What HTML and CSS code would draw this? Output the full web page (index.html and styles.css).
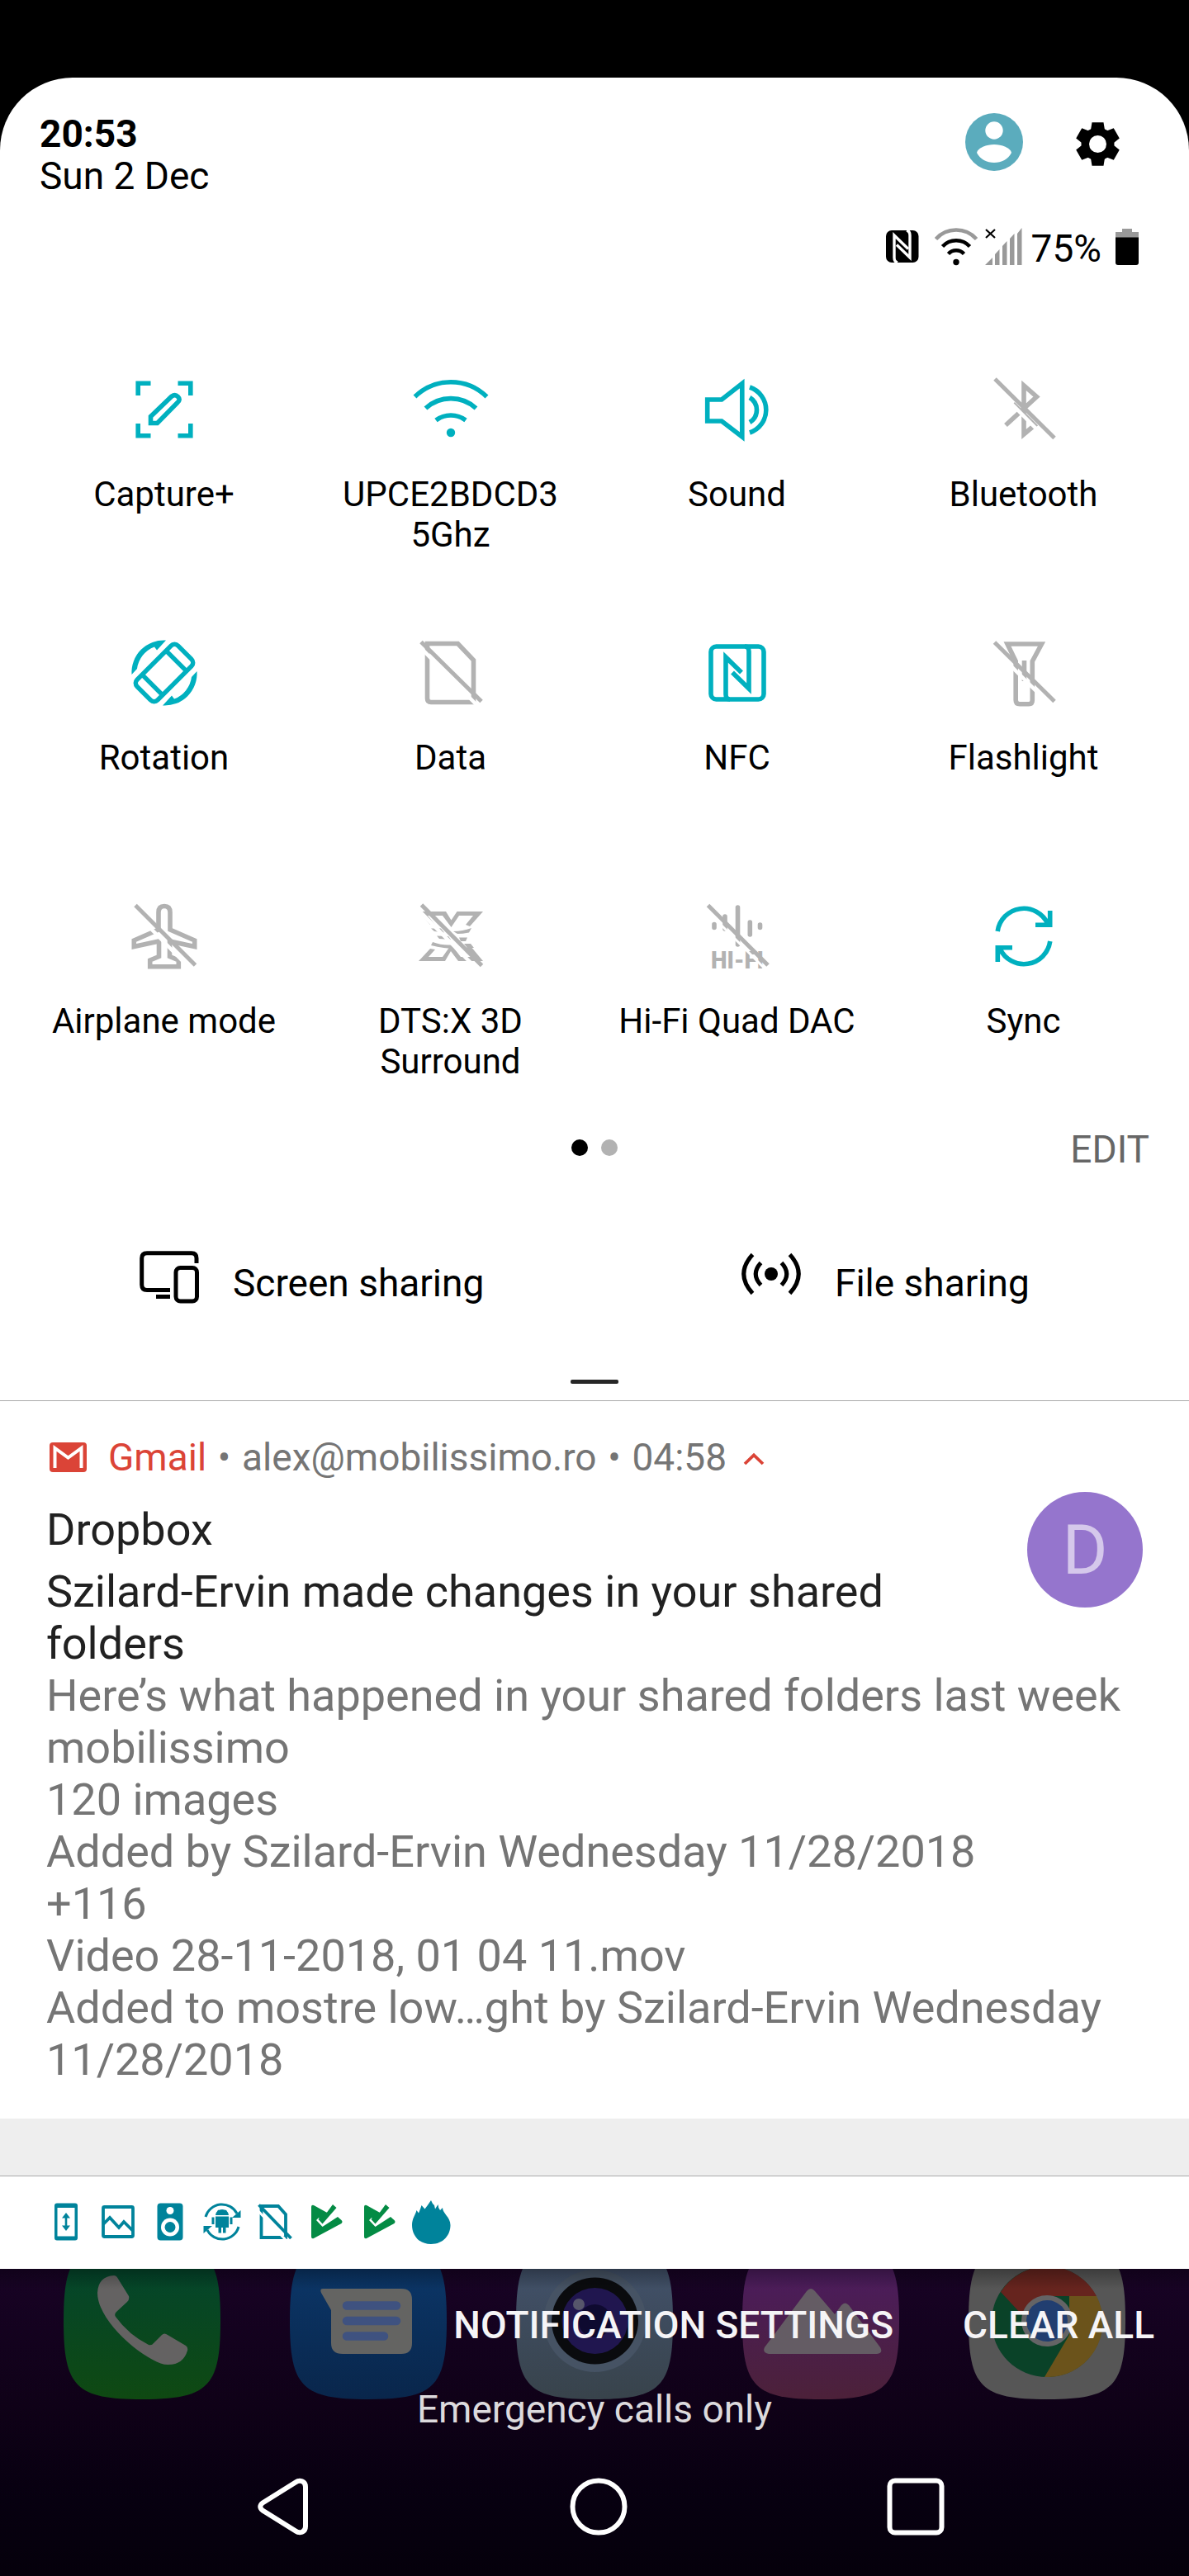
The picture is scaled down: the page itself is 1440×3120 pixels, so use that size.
FILE: index.html
```
<!DOCTYPE html>
<html lang="en">

<head>
    <meta charset="UTF-8">
    <meta name="viewport" content="width=device-width, initial-scale=1.0">
    <title>Notifications</title>
    <link rel="stylesheet" href="styles.css">
</head>

<body>
    <div class="screen">
        <div class="panel">
            <header class="header">
                <div class="clock">
                    <div class="time">20:53</div>
                    <div class="date">Sun 2 Dec</div>
                </div>
                <div class="header-actions">
                    <svg width="70" height="70" viewBox="0 0 70 70">
                        <circle cx="35" cy="35" r="35" fill="#5bacbd" />
                        <circle cx="35" cy="21" r="10.7" fill="#fff" />
                        <path d="M14 48C15 42 26 38 35 38S55 42 56 48C52 56 44 60 35 60S18 56 14 48Z" fill="#fff" />
                    </svg>
                    <svg class="gear" width="53" height="53" viewBox="-26.5 -26.5 53 53">
                        <g fill="#000">
                            <circle r="20" />
                            <path id="tooth" d="M-7 26.3H7L9 14H-9ZM-7 -26.3H7L9 -14H-9Z" />
                            <use href="#tooth" transform="rotate(60)" />
                            <use href="#tooth" transform="rotate(120)" />
                        </g>
                        <circle r="10.5" fill="#fff" />
                    </svg>
                </div>
            </header>

            <div class="status">
                <svg width="40" height="50" viewBox="0 0 40 50">
                    <rect y="5" width="39.5" height="39" rx="7" fill="#000" />
                    <path d="M14 44Q10 43 10 38V11L27 27.5" fill="none" stroke="#fff" stroke-width="3.4" />
                    <path d="M25 5Q29 6 29 11V38L13 22.500" fill="none" stroke="#fff" stroke-width="3.4" />
                </svg>
                <svg class="status-wifi" width="52" height="50" viewBox="-26 0 52 50">
                    <g fill="none" stroke="#000" stroke-width="4.500">
                        <path d="M-24.500 15.500A33 33 0 0 1 24.500 15.500" stroke="#999" />
                        <path d="M-16.500 24.500A22.500 22.500 0 0 1 16.500 24.500" />
                        <path d="M-9.500 33.500A13 13 0 0 1 9.500 33.500" />
                    </g>
                    <circle cy="43.500" r="3.700" fill="#000" />
                </svg>
                <svg class="status-signal" width="46" height="50" viewBox="0 0 46 50">
                    <path d="M1 4L12 14M12 4L1 14" stroke="#000" stroke-width="2.200" />
                    <path d="M0 47L9 38V47ZM12 47V34L17.500 28V47ZM21 47V24L26.500 18V47ZM30 47V15L35.500 9V47ZM39 47V9L44.500 2V47Z" fill="#999" />
                </svg>
                <span class="percent">75%</span>
                <svg class="battery" width="28" height="50" viewBox="0 0 28 50">
                    <path d="M0 14V7H8V3H20V7H28V14Z" fill="#999" />
                    <path d="M0 13.500H28V44Q28 47 25 47H3Q0 47 0 44Z" fill="#000" />
                </svg>
            </div>

            <div class="tiles">
                <div class="tile on">
                    <svg viewBox="-48 -48 96 96">
                        <path d="M-31.800 -17V-31.800H-16.500M16.500 -31.800H31.800V-17M31.800 17V31.800H16.500M-16.500 31.800H-31.800V17" />
                        <path d="M-16.500 16.500V8.500L9 -16Q13 -19 16.500 -15.500T16 -8.500L-8.500 16.500Z" />
                    </svg>
                    <span>Capture+</span>
                </div>
                <div class="tile on">
                    <svg viewBox="-48 -48 96 96">
                        <path d="M-43.500 -15.500A62 62 0 0 1 43.500 -15.500M-30.500 -1.500A45 45 0 0 1 30.500 -1.500M-18 13A30 30 0 0 1 18 13" />
                        <circle class="solid" cy="28" r="5.200" />
                    </svg>
                    <span>UPCE2BDCD3<br>5Ghz</span>
                </div>
                <div class="tile on">
                    <svg viewBox="-48 -48 96 96">
                        <path d="M-36.300 -12H-19L5.800 -31.500V33L-19 14H-36.300Z" />
                        <path d="M15 -27A29 29 0 0 1 15 28M15 -14.500A17.500 17.500 0 0 1 15 15.500" />
                    </svg>
                    <span>Sound</span>
                </div>
                <div class="tile">
                    <svg viewBox="-48 -48 96 96">
                        <path d="M-22 19L15.500 -15.500L0 -29V30L13 19L0 6L-13 -7" />
                        <path class="gap" d="M-40.500 -33L32 40.500" />
                        <path class="slash" d="M-35 -37L37 34.500" />
                    </svg>
                    <span>Bluetooth</span>
                </div>

                <div class="tile on">
                    <svg viewBox="-48 -48 96 96">
                        <g transform="rotate(-45)">
                            <rect x="-35" y="-17.500" width="70" height="35" rx="6" />
                            <path d="M-20.500 -17.500V17.500M20.500 -17.500V17.500" />
                            <path d="M-27.700 -11.500V11.500M27.700 -11.500V11.500" class="thin" />
                        </g>
                        <path class="solid" d="M-39.500 2A39 39 0 0 1 2 -39.500L-9 -27.500L-12 -31.500A33 33 0 0 0 -33 -5Z" />
                        <path class="solid" d="M-39.500 2A39 39 0 0 1 2 -39.500L-9 -27.500L-12 -31.500A33 33 0 0 0 -33 -5Z" transform="rotate(180)" />
                    </svg>
                    <span>Rotation</span>
                </div>
                <div class="tile">
                    <svg viewBox="-48 -48 96 96">
                        <path d="M-28.500 -35.500H8.500L27.500 -15.500V35.500H-24Q-28.500 35.500 -28.500 31Z" />
                        <path class="gap" d="M-42 -36L31.500 39" />
                        <path class="slash" d="M-36 -37.500L37 34.500" />
                    </svg>
                    <span>Data</span>
                </div>
                <div class="tile on">
                    <svg viewBox="-48 -48 96 96">
                        <rect x="-32" y="-32" width="64" height="64" rx="6.500" />
                        <path d="M9 -32Q14 -32 14 -26V19L-6 -.5" />
                        <path d="M-9 32Q-14 32 -14 26V-19L5 -.5" />
                    </svg>
                    <span>NFC</span>
                </div>
                <div class="tile">
                    <svg viewBox="-48 -48 96 96">
                        <path d="M-20 -35H21.500L10.300 -14V33Q10.300 37.800 6 37.800H-5Q-9.800 37.800 -9.800 33V-14ZM.5 -15V10" />
                        <path class="gap" d="M-41.500 -34L32 39" />
                        <path class="slash" d="M-35.500 -37L37 34.500" />
                    </svg>
                    <span>Flashlight</span>
                </div>

                <div class="tile">
                    <svg viewBox="-48 -48 96 96">
                        <path d="M0 -36.500Q7 -36.500 7 -29V-8L36.700 5V12.500L6.500 6V24.500L17.300 29V36.800H-17.300V29L-6.500 24.500V6L-36.700 12.500V5L-7 -8V-29Q-7 -36.500 0 -36.500Z" />
                        <path class="gap" d="M-40.500 -34L32 40" />
                        <path class="slash" d="M-35 -37.500L37.500 35" />
                    </svg>
                    <span>Airplane mode</span>
                </div>
                <div class="tile">
                    <svg viewBox="-48 -48 96 96">
                        <path class="solid" d="M-39 -30H-6L.5 -19.500L7.500 -30H39L23 -12L18 -14L27 -25H10L.5 -11L-10 -25H-28L-19 -14H-25Z" />
                        <path class="solid" d="M-39 30H-7L0 18L9 30H39L24 12L18 14L26 25H12L.5 10L-10 25H-27L-19 16L-25 15Z" />
                        <path class="solid" d="M-24 -9.500H-12L-8 -4.500L-20 -6ZM3 -6Q14 -6 25 -10L22 -4.500Q14 -3 8 -3ZM-17 -.5L-3 0L0 4L-14 3ZM10 1.500H20L18 6L12 6ZM-22 7Q-8 12 3 10L6 15Q-8 15 -24 11ZM16 9L24 9L28 14H20Z" />
                        <path class="gap" d="M-40.500 -33L33 41" />
                        <path class="slash" d="M-35.500 -38L37.500 35.500" />
                    </svg>
                    <span>DTS:X 3D Surround</span>
                </div>
                <div class="tile">
                    <svg viewBox="-48 -48 96 96">
                        <path class="bars" d="M-28 -14.500V-10.500M-15 -24V-9M.5 -35V10M15.300 -17V-2M27.500 -14V-10.500" />
                        <text x="-32" y="38.500" textLength="64" lengthAdjust="spacingAndGlyphs">HI-FI</text>
                        <path class="gap narrow" d="M-40 -34L34 40" />
                        <path class="slash" d="M-35.500 -37.500L37 35" />
                    </svg>
                    <span>Hi-Fi Quad DAC</span>
                </div>
                <div class="tile on">
                    <svg viewBox="-48 -48 96 96">
                        <path d="M-31.800 -6A32 32 0 0 1 29 -15M31.700 -31V-13.800H14" />
                        <path d="M31.800 6A32 32 0 0 1 -29 15M-31.700 31V13.800H-14" />
                    </svg>
                    <span>Sync</span>
                </div>
            </div>

            <div class="pager">
                <div class="dots"><i class="active"></i><i></i></div>
                <span class="edit">EDIT</span>
            </div>

            <div class="share">
                <div class="share-item">
                    <svg width="72" height="66" viewBox="0 0 72 66">
                        <g fill="none" stroke="#000" stroke-width="5">
                            <path d="M69 15V9Q69 2.700 63 2.700H9Q2.700 2.700 2.700 9V41Q2.700 47.500 9 47.500H37M20 55.500H37" />
                            <rect x="44" y="20.500" width="25.500" height="40.500" rx="5.500" />
                        </g>
                    </svg>
                    <span>Screen sharing</span>
                </div>
                <div class="share-item">
                    <svg width="72" height="66" viewBox="0 0 72 66">
                        <circle cx="36" cy="28" r="8" />
                        <g fill="none" stroke="#000" stroke-width="5">
                            <path d="M13.500 4.500Q-8 28 13.500 51.500M58.500 4.500Q80 28 58.500 51.500M23.500 14.500Q11 28 23.500 41.500M48.500 14.500Q61 28 48.500 41.500" />
                        </g>
                    </svg>
                    <span>File sharing</span>
                </div>
            </div>
            <div class="handle"></div>

            <div class="notification">
                <div class="source">
                    <svg width="45" height="36" viewBox="0 0 45 36">
                        <rect width="45" height="36" rx="4" fill="#db4437" />
                        <path d="M6.500 31V7L22.500 18.500L38.500 7V31" fill="none" stroke="#fff" stroke-width="4" />
                    </svg>
                    <span class="app">Gmail</span>
                    <span class="sep">•</span>
                    <span>alex@mobilissimo.ro</span>
                    <span class="sep">•</span>
                    <span>04:58</span>
                    <svg class="chevron" width="26" height="16" viewBox="0 0 26 16">
                        <path d="M2 14L13 3.500L24 14" fill="none" stroke="#db4437" stroke-width="3.800" />
                    </svg>
                </div>
                <div class="top">
                    <div class="heading">
                        <div class="sender">Dropbox</div>
                        <div>Szilard-Ervin made changes in your shared folders</div>
                    </div>
                    <div class="avatar">D</div>
                </div>
                <div class="message">
                    Here’s what happened in your shared folders last week<br>
                    mobilissimo<br>
                    120 images<br>
                    Added by Szilard-Ervin Wednesday 11/28/2018<br>
                    +116<br>
                    Video 28-11-2018, 01 04 11.mov<br>
                    Added to mostre low…ght by Szilard-Ervin Wednesday<br>
                    11/28/2018
                </div>
            </div>
            <div class="divider"></div>

            <div class="minor">
                <svg viewBox="-30 -30 60 60">
                    <path d="M-11 -22.500H11Q14 -22.500 14 -19.500V19.500Q14 22.500 11 22.500H-11Q-14 22.500 -14 19.500V-19.500Q-14 -22.500 -11 -22.500ZM-10.500 -17V17.500H10.500V-17Z" fill-rule="evenodd" />
                    <path d="M0 -11L5 -4.500H1.300V4.500H5L0 11L-5 4.500H-1.300V-4.500H-5Z" />
                </svg>
                <svg viewBox="-30 -30 60 60">
                    <rect class="line" x="-18" y="-18" width="36" height="36" rx="1.500" />
                    <path class="line" d="M-18 3L-10 -5L1 7L7 0L18 11" />
                </svg>
                <svg viewBox="-30 -30 60 60">
                    <rect x="-15.500" y="-22.500" width="31" height="45" rx="4" />
                    <circle class="cut" cy="-13.500" r="4.500" />
                    <circle class="cut" cy="6.500" r="11" />
                    <circle cy="6.500" r="6.500" />
                </svg>
                <svg viewBox="-30 -30 60 60">
                    <path class="ring" d="M-20 -6A20.500 20.500 0 0 1 18 -10M20 6A20.500 20.500 0 0 1 -18 10" />
                    <path d="M22.500 -14V-5H12ZM-22.500 14V5H-12Z" />
                    <path d="M-8 -8A8 7 0 0 1 8 -8ZM-8 -6.500H8V7H4.500V13.500H1V7H-1V13.500H-4.500V7H-8ZM-12.500 -5.500H-9.500V3H-12.500ZM9.500 -5.500H12.500V3H9.500Z" />
                    <path class="antenna" d="M-5 -14L-3 -11M5 -14L3 -11" />
                </svg>
                <svg viewBox="-30 -30 60 60">
                    <path class="line" d="M-15.500 -19H5L14 -9V19H-15.500Z" />
                    <path class="gap" d="M-23 -17L15 23" />
                    <path class="line" d="M-18.500 -20.500L20.500 20" />
                </svg>
                <svg class="play" viewBox="-30 -30 60 60">
                    <path d="M-18 -18Q-18 -21 -15 -20L3 -10L-5 -1L-9 -5L-12 -2L-4.500 6L14 -6L18.500 -2Q20.500 0 18.500 2L-15 20Q-18 21 -18 18ZM8 -21L12.500 -17L-4.500 2.500L-9.500 -3L-7 -6L-4.500 -4Z" />
                </svg>
                <svg class="play" viewBox="-30 -30 60 60">
                    <path d="M-18 -18Q-18 -21 -15 -20L3 -10L-5 -1L-9 -5L-12 -2L-4.500 6L14 -6L18.500 -2Q20.500 0 18.500 2L-15 20Q-18 21 -18 18ZM8 -21L12.500 -17L-4.500 2.500L-9.500 -3L-7 -6L-4.500 -4Z" />
                </svg>
                <svg viewBox="-30 -30 60 60">
                    <path d="M0 27C-15 27 -23 16 -23 4C-23 -4 -19 -8 -17.500 -14L-15 -10.500Q-13 -15 -11.500 -20L-7.500 -15.500Q-4 -20 0 -26Q1.500 -22 4 -20L5 -15.500L8.500 -21Q8.500 -17 11 -14L14 -17C14 -10 23.500 -6 23.500 4C23.500 16 15 27 0 27Z" />
                </svg>
            </div>
        </div>

        <div class="home">
            <!-- dock of the launcher, seen dimmed under the shade -->
            <svg class="dock" width="1440" height="170" viewBox="0 2748 1440 170">
                <defs>
                    <linearGradient id="phone" x1="0" y1="0" x2="0" y2="1">
                        <stop offset=".2" stop-color="#04452a" />
                        <stop offset="1" stop-color="#0f4912" />
                    </linearGradient>
                    <linearGradient id="sms" x1="0" y1="0" x2="0" y2="1">
                        <stop offset=".2" stop-color="#0b3566" />
                        <stop offset="1" stop-color="#09264b" />
                    </linearGradient>
                    <linearGradient id="cam" x1="0" y1="0" x2="0" y2="1">
                        <stop offset=".2" stop-color="#415068" />
                        <stop offset="1" stop-color="#38434b" />
                    </linearGradient>
                    <linearGradient id="gallery" x1="0" y1="0" x2="0" y2="1">
                        <stop offset=".2" stop-color="#4b1c5c" />
                        <stop offset="1" stop-color="#4c2139" />
                    </linearGradient>
                    <linearGradient id="shade" x1="0" y1="0" x2="0" y2="1">
                        <stop offset="0" stop-color="#000" stop-opacity=".3" />
                        <stop offset="1" stop-color="#000" stop-opacity="0" />
                    </linearGradient>
                    <path id="squircle" d="M0 95C0 15 15 0 95 0S190 15 190 95S175 190 95 190S0 175 0 95Z" />
                </defs>
                <use href="#squircle" x="77" y="2716" fill="url(#phone)" />
                <use href="#squircle" x="351" y="2716" fill="url(#sms)" />
                <use href="#squircle" x="625" y="2716" fill="url(#cam)" />
                <use href="#squircle" x="899" y="2716" fill="url(#gallery)" />
                <use href="#squircle" x="1173" y="2716" fill="#565656" />

                <path d="M138 2756Q141 2756 143 2760L156 2781Q157 2785 154 2788L141 2800Q138 2803 140 2806Q156 2828 180 2840Q184 2841 186 2838L196 2828Q199 2825 203 2828L225 2841Q228 2843 227 2847Q222 2864 204 2864C184 2866 118 2815 118 2777Q119 2757 138 2756Z" fill="#646262" />

                <path d="M391 2772H486Q499 2772 499 2785V2838Q499 2851 486 2851H415Q401 2851 401 2838V2798L389 2777Q387 2772 391 2772Z" fill="#646462" />
                <path d="M420 2792.500H480M420 2811H480M420 2829.500H465" stroke="#3f5280" stroke-width="10.500" stroke-linecap="round" />

                <circle cx="720.500" cy="2811" r="62" fill="#465364" />
                <circle cx="720.500" cy="2811" r="52.500" fill="#0a0b0e" />
                <circle cx="720.500" cy="2811" r="40" fill="#20164f" />
                <circle cx="720.500" cy="2811" r="20" fill="#0e0a30" />
                <circle cx="701" cy="2791" r="7" fill="#56566b" />

                <path d="M977 2775Q982 2769 987 2775L1011 2803L1019 2792Q1023.500 2787 1028 2792L1066 2843Q1070 2850 1062 2851H931Q923 2850 926 2843Z" fill="#645c64" />

                <circle cx="1268" cy="2812" r="67" fill="#0a4228" />
                <path d="M1212 2776A67 67 0 0 1 1328 2781H1268A31 31 0 0 0 1238 2804Z" fill="#66241e" />
                <path d="M1328 2781A67 67 0 0 1 1265 2879L1295 2828V2781Z" fill="#6b531b" />
                <circle cx="1268" cy="2811" r="31" fill="#646466" />
                <circle cx="1268" cy="2811" r="25" fill="#213e70" />
                <rect y="2748" width="1440" height="24" fill="url(#shade)" />
            </svg>

            <div class="actions">
                <span>NOTIFICATION SETTINGS</span>
                <span>CLEAR ALL</span>
            </div>
            <div class="carrier">Emergency calls only</div>
            <nav class="nav">
                <svg width="70" height="70" viewBox="-4 0 70 70">
                    <path d="M7 30.500L47 5.500C52 2 59 4 59 11V59C59 66 52 68 47 64.500L7 39.500Q1.500 35 7 30.500Z" />
                </svg>
                <svg width="70" height="70" viewBox="0 0 70 70">
                    <circle cx="35" cy="35" r="31.500" />
                </svg>
                <svg width="70" height="70" viewBox="0 0 70 70">
                    <rect x="3.500" y="3.500" width="63" height="63" rx="6.500" />
                </svg>
            </nav>
        </div>
    </div>
</body>

</html>
```
FILE: styles.css
```
* {
    box-sizing: border-box;
}

body {
    margin: 0;
    background: #000;
    font-family: Roboto, "Liberation Sans", sans-serif;
    font-size: 46px;
    line-height: 54px;
    color: #000;
}

svg {
    display: block;
    flex-shrink: 0;
}

.screen {
    width: 1440px;
    height: 3120px;
    padding-top: 94px;
    overflow: hidden;
}

.panel {
    height: 2654px;
    background: #fff;
    border-radius: 88px 88px 0 0;
}

.header {
    display: flex;
    justify-content: space-between;
    height: 180px;
    padding: 43px 84px 0 48px;
}

.clock {
    line-height: 51px;
}

.time {
    font-weight: bold;
}

.header-actions {
    display: flex;
    gap: 64px;
}

.gear {
    margin-top: 11px;
}

/* status icons */
.status {
    display: flex;
    justify-content: flex-end;
    height: 54px;
    padding-right: 61px;
}

.status-wifi {
    margin-left: 19px;
}

.status-signal {
    margin: 0 10px 0 9px;
}

.battery {
    margin-left: 17px;
}

/* quick settings */
.tiles {
    display: grid;
    grid-template-columns: repeat(4, 347px);
    grid-auto-rows: 224px;
    row-gap: 95px;
    margin: 120px 0 0 25px;
}

.tile {
    display: flex;
    flex-direction: column;
    align-items: center;
    gap: 30px;
    padding: 0 30px;
    font-size: 42px;
    line-height: 49px;
    text-align: center;
    white-space: nowrap;
    color: #b2b2b2;
}

.tile.on {
    color: #00b0bf;
}

.tile span {
    color: #000;
}

.tile:nth-child(10) span {
    width: 200px;
    white-space: normal;
}

.tile svg {
    width: 96px;
    height: 96px;
    fill: none;
    stroke: currentColor;
    stroke-width: 5.6;
}

.tile .solid {
    fill: currentColor;
    stroke: none;
}

.tile .thin {
    stroke: #fff;
    stroke-width: 3;
}

.tile .gap {
    stroke: #fff;
    stroke-width: 4.5;
}

.tile .narrow {
    stroke-width: 3;
}

.tile .slash {
    stroke-width: 5;
}

.tile .bars {
    stroke-linecap: round;
}

.tile text {
    fill: currentColor;
    stroke: none;
    font-size: 29px;
    font-weight: 900;
}

.pager {
    display: grid;
    grid-template-columns: 1fr auto 1fr;
    margin-top: 55px;
    padding: 0 48px;
}

.dots {
    grid-column: 2;
    display: flex;
    gap: 16px;
    padding-top: 15px;
}

.dots i {
    width: 20px;
    height: 20px;
    border-radius: 50%;
    background: #b2b2b2;
}

.dots .active {
    background: #000;
}

.edit {
    text-align: right;
    color: #666;
}

.share {
    display: grid;
    grid-template-columns: 1fr 1fr;
    margin-top: 96px;
}

.share-item {
    display: flex;
    gap: 41px;
    padding-left: 169px;
}

.share-item + .share-item {
    padding-left: 178px;
}

.share-item span {
    margin-top: 12px;
}

.handle {
    width: 58px;
    height: 5px;
    margin: 90px auto 20px;
    border-radius: 2px;
    background: #262626;
}

/* gmail card */
.notification {
    height: 870px;
    padding: 41px 56px 0;
    border-top: 1px solid #aaa;
    font-size: 54px;
    line-height: 63px;
    color: #757575;
}

.source {
    display: flex;
    align-items: center;
    height: 54px;
    padding-left: 4px;
    font-size: 46px;
    line-height: 54px;
}

.app {
    margin-left: 26px;
    color: #db4437;
}

.sep {
    width: 43px;
    text-align: center;
}

.chevron {
    margin: 4px 0 0 20px;
}

.top {
    display: flex;
    justify-content: space-between;
    margin-top: 29px;
    color: #212121;
}

.heading {
    width: 1060px;
}

.sender {
    margin-bottom: 12px;
}

.avatar {
    width: 140px;
    height: 140px;
    margin-top: -14px;
    border-radius: 50%;
    background: #9575cd;
    color: #d5c8eb;
    font-size: 84px;
    line-height: 141px;
    text-align: center;
}

.divider {
    height: 70px;
    background: #eee;
    border-bottom: 1px solid #aaa;
}

.minor {
    display: flex;
    padding: 25px 0 0 50px;
    fill: #00839b;
}

.minor svg {
    width: 60px;
    height: 60px;
    margin-right: 3.1px;
}

.minor .line,
.minor .ring,
.minor .antenna {
    fill: none;
    stroke: #00839b;
    stroke-width: 3.8;
}

.minor .ring {
    stroke-width: 3;
}

.minor .antenna {
    stroke-width: 1.5;
}

.minor .gap {
    stroke: #fff;
    stroke-width: 3;
}

.minor .cut {
    fill: #fff;
}

.minor .play {
    fill: #048b44;
}

/* bottom of the screen */
.home {
    position: relative;
    height: 372px;
    padding-top: 41px;
    background: linear-gradient(#180325, #0f0117 45%, #070010 75%, #05000b);
}

.dock {
    position: absolute;
    top: 0;
    left: 0;
}

.actions {
    position: relative;
    display: flex;
    justify-content: flex-end;
    gap: 84px;
    padding-right: 42px;
    font-weight: 500;
    color: #f5f4f6;
}

.carrier {
    position: relative;
    margin-top: 48px;
    text-align: center;
    color: #dcdadd;
}

.nav {
    display: grid;
    grid-template-columns: repeat(3, 383.5px);
    justify-items: center;
    margin: 56px 0 0 150px;
    fill: none;
    stroke: #fff;
    stroke-width: 6;
}
```
